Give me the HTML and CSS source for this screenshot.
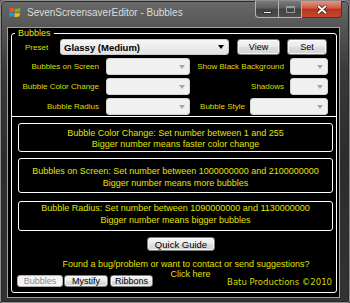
FILE: index.html
```html
<!DOCTYPE html>
<html lang="en">
<head>
    <meta charset="UTF-8">
    <meta name="viewport" content="width=device-width, initial-scale=1.0">
    <title>SevenScreensaverEditor - Bubbles</title>
    <link rel="stylesheet" href="styles.css">
</head>
<body>
    <div class="titlebar">
        <svg class="app-icon" width="12" height="11" viewBox="0 0 12 11">
            <path d="M0.6 1.6 Q2.6 0.4 5.5 1.2 L5 5 Q2.6 4.3 0.4 5.1 Z" fill="#f25022"/>
            <path d="M6.3 1.4 Q9 2.1 11.6 0.8 L11.1 4.6 Q8.5 5.8 5.8 5.2 Z" fill="#7fba00"/>
            <path d="M0.3 5.9 Q2.5 5.1 4.9 5.8 L4.5 9.7 Q2.3 8.9 -0.1 9.7 Z" fill="#00a4ef"/>
            <path d="M5.7 6 Q8.4 6.7 11 5.4 L10.5 9.3 Q8 10.4 5.3 9.8 Z" fill="#ffb900"/>
        </svg>
        <span class="title">SevenScreensaverEditor - Bubbles</span>
        <div class="caption-buttons">
            <div class="cap-btn cap-min"><span class="min-glyph"></span></div>
            <div class="cap-btn cap-max"><span class="max-glyph"></span></div>
            <div class="cap-btn cap-close">
                <svg width="10" height="9" viewBox="0 0 10 9">
                    <path d="M1.5 1.2 L8.5 7.8 M8.5 1.2 L1.5 7.8" stroke="#3a1008" stroke-width="3.4" stroke-linecap="round"/>
                    <path d="M1.5 1.2 L8.5 7.8 M8.5 1.2 L1.5 7.8" stroke="#fff" stroke-width="2" stroke-linecap="round"/>
                </svg>
            </div>
        </div>
    </div>

    <div class="client">
        <fieldset class="panel">
            <legend>Bubbles</legend>

            <div class="settings">
                <div class="row row-preset">
                    <span class="preset-label">Preset</span>
                    <div class="combo combo-preset">
                        <span class="combo-text">Glassy (Medium)</span>
                        <span class="arrow"></span>
                    </div>
                    <button class="btn btn-view">View</button>
                    <button class="btn btn-set">Set</button>
                </div>

                <div class="row">
                    <span class="label label-left">Bubbles on Screen</span>
                    <div class="combo combo-off combo-left"><span class="arrow"></span></div>
                    <span class="label label-right">Show Black Background</span>
                    <div class="combo combo-off combo-small"><span class="arrow"></span></div>
                </div>

                <div class="row">
                    <span class="label label-left">Bubble Color Change</span>
                    <div class="combo combo-off combo-left"><span class="arrow"></span></div>
                    <span class="label label-right">Shadows</span>
                    <div class="combo combo-off combo-small"><span class="arrow"></span></div>
                </div>

                <div class="row">
                    <span class="label label-left">Bubble Radius</span>
                    <div class="combo combo-off combo-left"><span class="arrow"></span></div>
                    <span class="label label-style">Bubble Style</span>
                    <div class="combo combo-off combo-wide"><span class="arrow"></span></div>
                </div>
            </div>

            <div class="note note-color">
                Bubble Color Change: Set number between 1 and 255<br>
                Bigger number means faster color change
            </div>
            <div class="note note-screen">
                Bubbles on Screen: Set number between 1000000000 and 2100000000<br>
                Bigger number means more bubbles
            </div>
            <div class="note note-radius">
                Bubble Radius: Set number between 1090000000 and 1130000000<br>
                Bigger number means bigger bubbles
            </div>

            <div class="guide">
                <button class="btn btn-guide">Quick Guide</button>
            </div>

            <p class="found">Found a bug/problem or want to contact or send suggestions?</p>

            <div class="bottom-row">
                <div class="tabs">
                    <button class="btn tab tab-off">Bubbles</button>
                    <button class="btn tab">Mystify</button>
                    <button class="btn tab">Ribbons</button>
                </div>
                <a class="click-here">Click here</a>
                <span class="credit">Batu Productions ©2010</span>
            </div>
        </fieldset>
    </div>
</body>
</html>
```

FILE: styles.css
```css
* {
    margin: 0;
    padding: 0;
    box-sizing: border-box;
}

body {
    width: 350px;
    height: 303px;
    overflow: hidden;
    display: flex;
    flex-direction: column;
    font-family: 'Liberation Sans', Arial, sans-serif;
    background: linear-gradient(180deg, #6a6a6a 0px, #565656 26px, #3a3a3a 70px, #2c2c2c 160px, #333 100%);
    border: 1px solid #8e8e8e;
    border-radius: 6px 6px 2px 2px;
    box-shadow: inset 0 0 0 1px #2a2a2a;
}

/* title bar */

.titlebar {
    height: 26px;
    display: flex;
    align-items: flex-start;
}

.app-icon {
    margin: 6px 0 0 8px;
}

.title {
    margin: 6px 0 0 6px;
    font-size: 10px;
    line-height: 12px;
    color: #dcdcdc;
    white-space: nowrap;
}

.caption-buttons {
    display: flex;
    margin-left: auto;
    margin-right: 7px;
}

.cap-btn {
    height: 17px;
    display: flex;
    align-items: center;
    justify-content: center;
    border: 1px solid #b4b4b4;
    border-top: none;
    background: linear-gradient(180deg, #7a7a7a 0%, #5c5c5c 45%, #414141 50%, #4e4e4e 100%);
}

.cap-min {
    width: 24px;
    border-radius: 0 0 0 4px;
}

.cap-max {
    width: 23px;
    border-left: none;
}

.cap-close {
    width: 40px;
    border-left: none;
    border-color: #6d2418;
    border-radius: 0 0 4px 0;
    background: linear-gradient(180deg, #e59582 0%, #cf5a42 45%, #b5341d 50%, #c9472c 100%);
}

.min-glyph {
    width: 9px;
    height: 3px;
    margin-top: 6px;
    background: #f4f4f4;
    border: 1px solid #333;
}

.max-glyph {
    width: 9px;
    height: 7px;
    border: 1px solid #9a9a9a;
    border-top-width: 2px;
}

/* client area */

.client {
    flex: 1;
    margin: 0 9px 4px 6px;
    background: #000;
    border: 1px solid #a0a0a0;
    display: flex;
    flex-direction: column;
}

.panel {
    margin: 0 2px 4px 3px;
    border: 1px solid #fff;
    border-radius: 3px;
    min-width: 0;
}

.panel legend {
    margin-left: 3px;
    padding: 0 3px;
    font-size: 9px;
    line-height: 11px;
    color: #e6e600;
}

.settings {
    display: flex;
    flex-direction: column;
    gap: 3px;
    padding-bottom: 1px;
    border-bottom: 1px solid #fff;
}

.row {
    display: flex;
    align-items: center;
    height: 17px;
}

.row-preset {
    height: 16px;
}

.preset-label,
.label {
    font-size: 8px;
    color: #dede00;
    white-space: nowrap;
}

.preset-label {
    width: 48px;
    padding-left: 13px;
}

.label {
    text-align: right;
}

.label-left {
    width: 87px;
}

.label-right {
    width: 94px;
}

.label-style {
    width: 55px;
}

.combo {
    height: 100%;
    display: flex;
    align-items: center;
    border: 1px solid #d4d4d4;
    border-radius: 3px;
    background: #f0f0f0;
}

.combo-preset {
    width: 169px;
    border-color: #c9c9c9;
    background: linear-gradient(180deg, #f7f7f7 0%, #ececec 50%, #e2e2e2 100%);
}

.combo-text {
    flex: 1;
    padding-left: 3px;
    font-size: 9.5px;
    font-weight: bold;
    color: #000;
}

.arrow {
    margin-left: auto;
    margin-right: 4px;
    border-left: 3px solid transparent;
    border-right: 3px solid transparent;
    border-top: 4px solid #000;
}

.combo-off .arrow {
    border-top-color: #a6a6a6;
}

.combo-left {
    width: 84px;
    margin-left: 7px;
}

.combo-small {
    width: 38px;
    margin-left: 6px;
}

.combo-wide {
    width: 78px;
    margin-left: 5px;
}

.btn {
    height: 100%;
    font-family: 'Liberation Sans', Arial, sans-serif;
    font-size: 9px;
    color: #000;
    border: 1px solid #7a7a7a;
    border-radius: 3px;
    background: linear-gradient(180deg, #f4f4f4 0%, #ececec 45%, #dedede 50%, #d2d2d2 100%);
    box-shadow: inset 0 0 0 1px rgba(255, 255, 255, 0.7);
}

.btn-view {
    width: 43px;
    margin-left: 8px;
}

.btn-set {
    width: 40px;
    margin-left: 7px;
}

/* notes */

.note {
    margin: 6px 3px 0 6px;
    border: 1px solid #fff;
    border-radius: 3px;
    text-align: center;
    font-size: 9px;
    line-height: 12px;
    color: #e2e200;
    white-space: nowrap;
}

.note-color {
    height: 29px;
    padding-top: 4px;
    line-height: 11px;
}

.note-screen {
    height: 35px;
    padding-top: 6px;
}

.note-radius {
    height: 30px;
    margin-top: 8px;
}

.guide {
    margin-top: 6px;
    padding-left: 14px;
    display: flex;
    justify-content: center;
}

.btn-guide {
    width: 68px;
    height: 14px;
    font-size: 9.5px;
}

/* footer */

.found {
    margin-top: 8px;
    padding-left: 24px;
    text-align: center;
    font-size: 9px;
    line-height: 10px;
    color: #e2e200;
    white-space: nowrap;
}

.bottom-row {
    display: grid;
    grid-template-columns: auto 1fr auto;
    height: 18px;
    padding: 0 4px 0 5px;
    margin-bottom: 5px;
}

.tabs {
    align-self: end;
    display: flex;
    height: 12px;
}

.tab {
    margin-right: 1px;
}

.tab:nth-child(1) { width: 46px; }
.tab:nth-child(2) { width: 44px; margin-right: 2px; }
.tab:nth-child(3) { width: 43px; }

.tab-off {
    color: #8a8a8a;
    border-color: #b0b0b0;
    background: #f4f4f4;
    box-shadow: none;
}

.click-here {
    justify-self: center;
    align-self: start;
    font-size: 9px;
    line-height: 10px;
    color: #e2e200;
}

.credit {
    align-self: end;
    font-family: 'DejaVu Sans', sans-serif;
    font-size: 8.5px;
    line-height: 10px;
    color: #d8d800;
    white-space: nowrap;
}
```
